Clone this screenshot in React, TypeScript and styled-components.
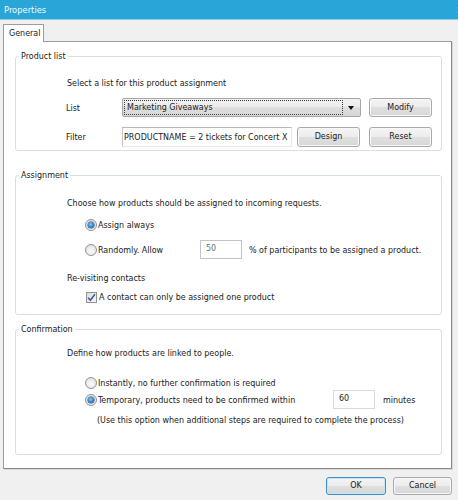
import React from "react";
import styled, { createGlobalStyle } from "styled-components";

const Global = createGlobalStyle`
  html, body { margin: 0; padding: 0; background: #f0f0f0; }
  body {
    font-family: "DejaVu Sans Condensed", "Liberation Sans", sans-serif;
    font-size: 8.9px;
    color: #1b1b1b;
  }
  * { box-sizing: border-box; }
`;

const Window = styled.div`
  width: 458px;
  height: 500px;
  display: flex;
  flex-direction: column;
  background: #f0f0f0;
  overflow: hidden;
`;

const TitleBar = styled.div`
  flex: none;
  height: 20px;
  background: #29a6d7;
  border-bottom: 1px solid #8ccde8;
  display: flex;
  align-items: center;
  justify-content: space-between;
  padding-left: 4px;
  color: #f2fafd;
  font-size: 9.3px;
  overflow: hidden;
`;

const CloseGlyph = styled.span`
  font-family: "Liberation Sans", sans-serif;
  font-weight: bold;
  font-size: 10px;
  color: #ffffff;
  margin-right: -5px;
`;

const Content = styled.div`
  flex: none;
  padding: 4px 6px 0 3px;
  display: flex;
  flex-direction: column;
`;

const TabStrip = styled.div`
  display: flex;
  height: 17px;
`;

const Tab = styled.div`
  width: 41px;
  height: 18px;
  background: #ffffff;
  border: 1px solid #9d9d9d;
  border-bottom: none;
  padding-left: 5px;
  line-height: 17px;
  position: relative;
  z-index: 1;
`;

const TabPanel = styled.div`
  width: 449px;
  background: #ffffff;
  border: 1px solid #9d9d9d;
  border-right-color: #8a8a8a;
  border-bottom-color: #8a8a8a;
  box-shadow: 1px 1px 0 #d8d8d8;
  padding: 8px 9px 13px 11px;
  display: flex;
  flex-direction: column;
`;

const Group = styled.fieldset<{ $mt?: number; $pb: number }>`
  margin: ${(p) => p.$mt ?? 0}px 0 0 0;
  padding: 0 0 ${(p) => p.$pb}px 3px;
  border: 1px solid #d5dfe5;
  border-radius: 3px;
  min-inline-size: 0;
`;

const Legend = styled.legend`
  padding: 0 2px;
  line-height: 12px;
  height: 12px;
`;

const GroupBody = styled.div`
  padding-left: 48px;
  display: flex;
  flex-direction: column;
`;

const TextLine = styled.div<{ $mt: number; $indent?: number }>`
  margin-top: ${(p) => p.$mt}px;
  margin-left: ${(p) => p.$indent ?? 0}px;
  line-height: 12px;
  height: 12px;
  white-space: nowrap;
`;

const FormRow = styled.div<{ $mt: number; $h: number; $indent?: number }>`
  margin-top: ${(p) => p.$mt}px;
  margin-left: ${(p) => p.$indent ?? 0}px;
  height: ${(p) => p.$h}px;
  display: flex;
  align-items: center;
  white-space: nowrap;
`;

const FieldLabel = styled.span<{ $w: number }>`
  width: ${(p) => p.$w}px;
  flex: none;
  line-height: 12px;
`;

const Select = styled.div`
  width: 239px;
  height: 19px;
  flex: none;
  margin-right: 8px;
  border: 1px solid #a6a6a6;
  border-radius: 2px;
  background: linear-gradient(#f2f2f2 0%, #ebebeb 50%, #dedede 50%, #d6d6d6 100%);
  display: flex;
  align-items: center;
  padding: 0 3px 0 1px;
`;

const SelectText = styled.div`
  flex: 1;
  height: 15px;
  border: 1px dotted #3a3a3a;
  padding-left: 2px;
  line-height: 13px;
`;

const Arrow = styled.span`
  width: 0;
  height: 0;
  margin: 0 3px 0 5px;
  border-left: 3.5px solid transparent;
  border-right: 3.5px solid transparent;
  border-top: 4px solid #111;
`;

const Button = styled.button<{ $w: number; $ml?: number; $h?: number; $primary?: boolean }>`
  width: ${(p) => p.$w}px;
  height: ${(p) => p.$h ?? 20}px;
  margin-left: ${(p) => p.$ml ?? 0}px;
  flex: none;
  padding: 0 0 1px 0;
  font: inherit;
  line-height: 1;
  display: flex;
  align-items: center;
  justify-content: center;
  color: #1b1b1b;
  border: 1px solid ${(p) => (p.$primary ? "#3d8fcb" : "#a9a9a9")};
  border-radius: 3px;
  background: linear-gradient(#f4f4f4 0%, #ececec 50%, #dfdfdf 50%, #d8d8d8 100%);
  box-shadow: inset 0 0 0 1px ${(p) => (p.$primary ? "#c5e6f9" : "#f8f8f8")};
`;

const TextField = styled.div`
  width: 170px;
  height: 20px;
  flex: none;
  border: 1px solid #e3e9ef;
  border-top-color: #b5b8bf;
  border-left-color: #c2c5cb;
  padding-left: 1px;
  line-height: 18px;
  overflow: hidden;
  white-space: nowrap;
`;

const NumberField = styled.div<{ $muted?: boolean }>`
  width: 42px;
  height: 19px;
  flex: none;
  border: 1px solid ${(p) => (p.$muted ? "#c4c4c4" : "#dadada")};
  padding-left: 5px;
  line-height: 15px;
  color: ${(p) => (p.$muted ? "#6f6f6f" : "#1b1b1b")};
`;

const After = styled.span<{ $ml: number }>`
  margin-left: ${(p) => p.$ml}px;
`;

const RadioMark = styled.span<{ $checked?: boolean }>`
  width: 12px;
  height: 12px;
  flex: none;
  margin-right: 1px;
  border-radius: 50%;
  border: 1px solid #8f9194;
  background: radial-gradient(circle at 50% 60%, #fbfbfb 0%, #e8e8e8 60%, #d6d6d6 100%);
  display: flex;
  align-items: center;
  justify-content: center;
  &::after {
    content: "";
    display: ${(p) => (p.$checked ? "block" : "none")};
    width: 6px;
    height: 6px;
    border-radius: 50%;
    background: radial-gradient(circle at 45% 40%, #8fd0f5 0%, #2a7fcf 55%, #17407a 100%);
    box-shadow: 0 0 0 0.5px #1c3f6b;
  }
`;

const CheckBox = styled.span`
  width: 11px;
  height: 11px;
  flex: none;
  margin-right: 2px;
  border: 1px solid #8f9194;
  background: linear-gradient(135deg, #dcdcdc 0%, #f6f6f6 100%);
  display: flex;
  align-items: center;
  justify-content: center;
`;

const Footer = styled.div`
  flex: none;
  display: flex;
  justify-content: flex-end;
  padding: 8px 6px 0 0;
  gap: 7px;
`;

function Radio({ checked, label, width }: { checked?: boolean; label: string; width?: number }) {
  return (
    <>
      <RadioMark $checked={checked} />
      {width ? <FieldLabel $w={width}>{label}</FieldLabel> : <span>{label}</span>}
    </>
  );
}

export default function App() {
  return (
    <Window>
      <Global />
      <TitleBar>
        <span>Properties</span>
        <CloseGlyph>x</CloseGlyph>
      </TitleBar>
      <Content>
        <TabStrip>
          <Tab>General</Tab>
        </TabStrip>
        <TabPanel>
          <Group $pb={3}>
            <Legend>Product list</Legend>
            <GroupBody>
              <TextLine $mt={15}>Select a list for this product assignment</TextLine>
              <FormRow $mt={9} $h={19} $indent={-1}>
                <FieldLabel $w={56}>List</FieldLabel>
                <Select>
                  <SelectText>Marketing Giveaways</SelectText>
                  <Arrow />
                </Select>
                <Button $w={63} $h={19}>Modify</Button>
              </FormRow>
              <FormRow $mt={10} $h={20} $indent={-1}>
                <FieldLabel $w={56}>Filter</FieldLabel>
                <TextField>PRODUCTNAME = 2 tickets for Concert X</TextField>
                <Button $w={63} $ml={5}>Design</Button>
                <Button $w={63} $ml={9}>Reset</Button>
              </FormRow>
            </GroupBody>
          </Group>

          <Group $mt={18} $pb={11}>
            <Legend>Assignment</Legend>
            <GroupBody>
              <TextLine $mt={16}>Choose how products should be assigned to incoming requests.</TextLine>
              <FormRow $mt={10} $h={12} $indent={18}>
                <Radio checked label="Assign always" />
              </FormRow>
              <FormRow $mt={9} $h={19} $indent={18}>
                <Radio label="Randomly. Allow" width={102} />
                <NumberField $muted>50</NumberField>
                <After $ml={7}>% of participants to be assigned a product.</After>
              </FormRow>
              <TextLine $mt={13}>Re-visiting contacts</TextLine>
              <FormRow $mt={7} $h={12} $indent={19}>
                <CheckBox>
                  <svg width="9" height="9" viewBox="0 0 9 9">
                    <path d="M1.2 4.8 L3.4 7.2 L7.9 1.3" fill="none" stroke="#3f5d9c" strokeWidth="1.6" />
                  </svg>
                </CheckBox>
                <span>A contact can only be assigned one product</span>
              </FormRow>
            </GroupBody>
          </Group>

          <Group $mt={8} $pb={28}>
            <Legend>Confirmation</Legend>
            <GroupBody>
              <TextLine $mt={12}>Define how products are linked to people.</TextLine>
              <FormRow $mt={18} $h={12} $indent={18}>
                <Radio label="Instantly, no further confirmation is required" />
              </FormRow>
              <FormRow $mt={1} $h={19} $indent={18}>
                <Radio checked label="Temporary, products need to be confirmed within" width={235} />
                <NumberField>60</NumberField>
                <After $ml={8}>minutes</After>
              </FormRow>
              <TextLine $mt={5} $indent={30}>
                (Use this option when additional steps are required to complete the process)
              </TextLine>
            </GroupBody>
          </Group>
        </TabPanel>
      </Content>
      <Footer>
        <Button $w={60} $h={18} $primary>OK</Button>
        <Button $w={59} $h={18}>Cancel</Button>
      </Footer>
    </Window>
  );
}
